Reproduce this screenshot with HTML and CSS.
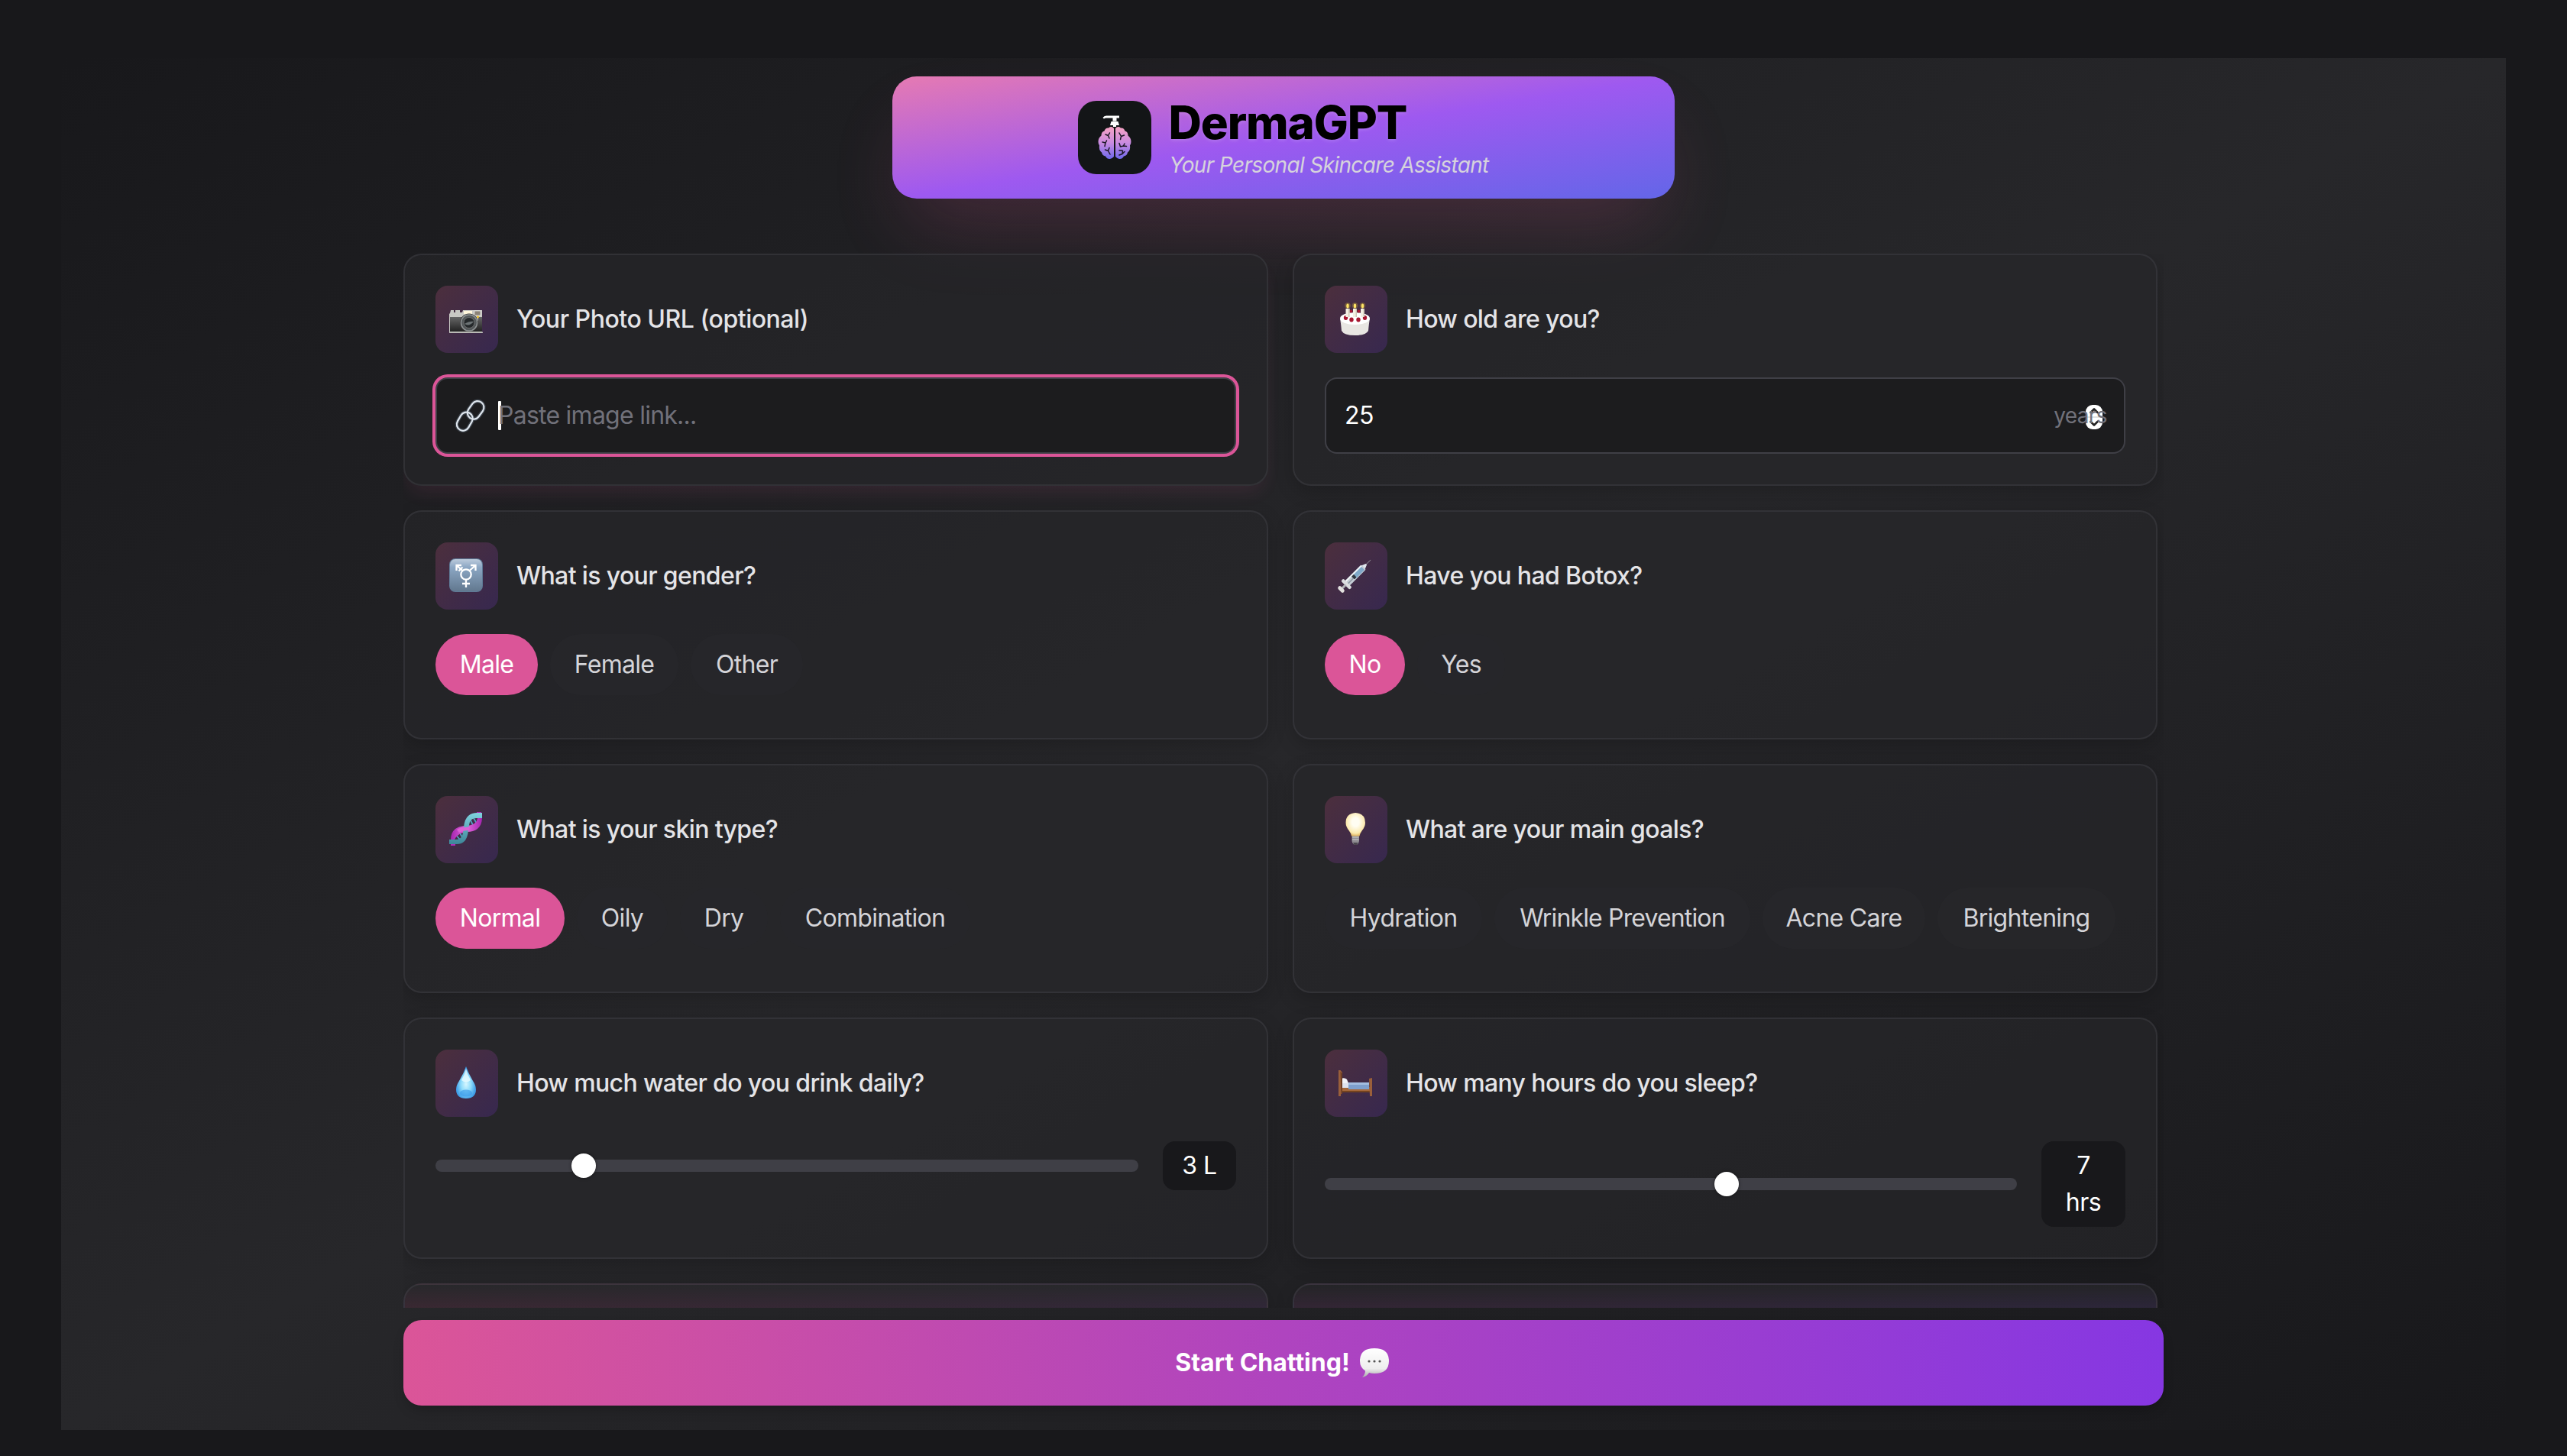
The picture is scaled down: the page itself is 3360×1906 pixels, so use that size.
FILE: index.html
```
<!DOCTYPE html>
<html lang="en">
<head>
<meta charset="utf-8">
<title>DermaGPT</title>
<link rel="stylesheet" href="styles.css">
</head>
<body>
<main class="panel">
  <header class="banner">
    <svg class="logo" viewBox="0 0 96 96">
      <defs><linearGradient id="brain" x1="0" y1="34" x2="0" y2="76" gradientUnits="userSpaceOnUse"><stop offset="0" stop-color="#f7a3c3"/><stop offset=".5" stop-color="#c98be0"/><stop offset="1" stop-color="#6f68ec"/></linearGradient></defs>
      <rect width="96" height="96" rx="24" fill="#131517"/>
      <path d="M54 19.500v3h-3.500v4h-5v-4H37q-2 0-3 1l-1.500-1.500q1.500-2.500 4.500-2.500zM43.500 27h9l1.500 5h-4v2h-4v-2h-4z" fill="#fff"/>
      <path d="M47 36q-3-3.500-7-.5-4-.5-5.500 4-4 1-4 6-4 3-4 8 0 3 1.500 5-1 6 3 9 1 4.500 5 5 2 4 6 3.500 3-.5 5-3zM49 36q3-3.500 7-.5 4-.5 5.500 4 4 1 4 6 4 3 4 8 0 3-1.500 5 1 6-3 9-1 4.500-5 5-2 4-6 3.500-3-.5-5-3z" fill="url(#brain)"/>
      <path d="M36 44l3.500 1.500 2-3.500M39.500 45.500l1.500 3.500M32 54l4 1 1.500-3M36 55l-1 4.500M35.500 64l4 1.500 1.500-4M39.500 65.500l2.500 4.500M54 42l2.500 4.500 4-1.500M56.500 46.500l-1 4M54 55.500l1.500 4.500 4-1 1.500-3M59.500 59l4 .5M54 71l4-1.500.5-4M58 69.500l3-3M54 65h4" fill="none" stroke="#1b1724" stroke-width="1.500" stroke-linecap="round" stroke-linejoin="round"/>
    </svg>
    <div class="brand">
      <h1 class="brand-name">DermaGPT</h1>
      <p class="brand-tag">Your Personal Skincare Assistant</p>
    </div>
  </header>

  <section class="questions">
    <article class="card card--active">
      <div class="card-head">
        <span class="tile"><svg class="emoji" viewBox="0 0 44 44">
          <defs><linearGradient id="cam" x1="0" y1="0" x2="0" y2="1"><stop offset="0" stop-color="#666"/><stop offset="1" stop-color="#222"/></linearGradient></defs>
          <path d="M0 16l1-1 1-4h4v3h2v-3h6v3h3l1-3h25v30H0z" fill="#c9c9c4"/><path d="M1 20h42v19H1z" fill="url(#cam)"/>
          <path d="M19 12h11v4H19z" fill="#fff6dc"/><path d="M33 12h8v6h-8z" fill="#8b8378" stroke="#eee" stroke-width=".7"/><path d="M32 20h6v5h-6z" fill="#ddd"/><circle cx="37.500" cy="20" r="1.400" fill="#f5c21b"/>
          <circle cx="26" cy="27.500" r="12" fill="#333"/><circle cx="26" cy="27.500" r="10.600" fill="#53585a" stroke="#8f9394" stroke-width="1.500"/><circle cx="26" cy="27.500" r="7" fill="#25292b" stroke="#777" stroke-width=".8"/><path d="M20 29q6 4 12-3-5-1-12 3z" fill="#6c7375"/>
          <path d="M0 39.500h44V41H0z" fill="#b8b8b4"/></svg></span>
        <h2 class="question question--photo">Your Photo URL (optional)</h2>
      </div>
      <div class="field field--focus">
        <svg class="link" viewBox="0 0 40 40"><g fill="none"><g stroke="#3b4149" stroke-width="4.400"><rect x="18.500" y="2" width="15" height="23" rx="7.500" transform="rotate(36 26 13.500)"/><rect x="5.500" y="15.500" width="15" height="23" rx="7.500" transform="rotate(30 13 27)"/></g><g stroke="#dfe6ee" stroke-width="2"><rect x="18.500" y="2" width="15" height="23" rx="7.500" transform="rotate(36 26 13.500)"/><rect x="5.500" y="15.500" width="15" height="23" rx="7.500" transform="rotate(30 13 27)"/></g></g></svg>
        <span class="caret"></span>
        <span class="placeholder">Paste image link...</span>
      </div>
    </article>

    <article class="card">
      <div class="card-head">
        <span class="tile"><svg class="emoji" viewBox="0 0 44 44">
          <path d="M2 22q1 5 2 16 3 6 17.500 6T39 38q1-11 2-16-4 7-19.500 7T2 22z" fill="#e8e6e2"/><ellipse cx="21.500" cy="22" rx="19.500" ry="8" fill="#fff"/>
          <g fill="#a8152f"><circle cx="16.500" cy="12.500" r="2"/><circle cx="26.500" cy="12.500" r="2"/><ellipse cx="9.500" cy="21" rx="2.700" ry="3"/><ellipse cx="17" cy="23.500" rx="2.700" ry="3"/><ellipse cx="26" cy="23.500" rx="2.700" ry="3"/><ellipse cx="34.500" cy="21" rx="2.700" ry="3"/></g>
          <path d="M9.500 9h5v11h-5zM19 9h5v11h-5zM29 9h5v11h-5z" fill="#f3efe2"/><path d="M13 9h1.500v11H13zM22.500 9H24v11h-1.500zM32.500 9H34v11h-1.500z" fill="#cfc8b6"/>
          <g fill="#b99a38" opacity=".4"><circle cx="12" cy="5" r="3.800"/><circle cx="21.500" cy="5" r="3.800"/><circle cx="31.500" cy="5" r="3.800"/></g><g fill="#ffe465"><ellipse cx="12" cy="5.500" rx="1.700" ry="3"/><ellipse cx="21.500" cy="5.500" rx="1.700" ry="3"/><ellipse cx="31.500" cy="5.500" rx="1.700" ry="3"/></g></svg></span>
        <h2 class="question">How old are you?</h2>
      </div>
      <div class="field field--number">
        <span class="value">25</span>
        <span class="unit">years</span>
        <svg class="stepper" viewBox="0 0 22 32"><rect width="22" height="32" rx="9" fill="#fff"/><path d="M0 15h22v2H0z" fill="#e2e2e2"/><path d="M6.500 10L11 5.500l4.500 4.500M6.500 22l4.500 4.500 4.500-4.500" fill="none" stroke="#222" stroke-width="2.600" stroke-linecap="round" stroke-linejoin="round"/></svg>
      </div>
    </article>

    <article class="card">
      <div class="card-head">
        <span class="tile"><svg class="emoji" viewBox="0 0 44 44">
          <defs><linearGradient id="gen" x1="0" y1="0" x2="0" y2="1"><stop offset="0" stop-color="#bccbdc"/><stop offset=".25" stop-color="#8ca7c4"/><stop offset="1" stop-color="#62788f"/></linearGradient></defs>
          <rect width="44" height="44" rx="8" fill="#5f7a96"/><rect x="1" y="1" width="42" height="42" rx="7" fill="url(#gen)"/>
          <g fill="none" stroke="#fff" stroke-width="2.300"><circle cx="22" cy="21" r="6.700"/><path d="M22 28v10M17 33h10M26.500 16L34 9.500M28 9h6.500v7M17.500 16L10 9.500M9.500 16V9H16M12.500 16.500l5-5"/></g></svg></span>
        <h2 class="question">What is your gender?</h2>
      </div>
      <div class="pills">
        <span class="pill pill--male pill--on">Male</span><span class="pill pill--female">Female</span><span class="pill pill--other">Other</span>
      </div>
    </article>

    <article class="card">
      <div class="card-head">
        <span class="tile"><svg class="emoji" viewBox="0 0 44 44">
          <g transform="translate(1 43) rotate(-45)">
            <path d="M46 0h12" stroke="#8b8792" stroke-width="1"/>
            <path d="M44-3.500l6 2.500v2l-6 2.500z" fill="#dfe6ec"/>
            <rect x="14" y="-4.500" width="31" height="9" rx="2" fill="#c4ccd4"/>
            <rect x="28" y="-3.500" width="15" height="7" fill="#7fa8c8"/>
            <rect x="25" y="-3" width="4" height="6" rx="1" fill="#2e3640"/>
            <path d="M15-3h29" stroke="#fff" stroke-width="1.300"/>
            <path d="M15 1h10" stroke="#8c95a0" stroke-width="1.500"/>
            <rect x="11" y="-8" width="4.500" height="16" rx="2" fill="#dcdde0"/>
            <rect x="4" y="-1.500" width="8" height="3" fill="#b3b5ba"/>
            <rect x="1" y="-5" width="5" height="10" rx="2.500" fill="#e2e0de"/>
          </g></svg></span>
        <h2 class="question">Have you had Botox?</h2>
      </div>
      <div class="pills">
        <span class="pill pill--no pill--on">No</span><span class="pill pill--yes">Yes</span>
      </div>
    </article>

    <article class="card">
      <div class="card-head">
        <span class="tile"><svg class="emoji" viewBox="0 0 44 44">
          <defs><linearGradient id="teal" x1="0" y1="0" x2="0" y2="1"><stop offset="0" stop-color="#7fd3df"/><stop offset="1" stop-color="#3d8598"/></linearGradient><linearGradient id="mag" x1="0" y1="0" x2="1" y2="0"><stop offset="0" stop-color="#a524b0"/><stop offset=".5" stop-color="#e468dc"/><stop offset="1" stop-color="#a524b0"/></linearGradient></defs>
          <path d="M36 0h6v4h-6zM2 40h6v4H2z" fill="#b02db8"/>
          <path d="M27 9l5 10M32 8l5 9M6 27l8 9M12 24l5 9" stroke="#4fa2c4" stroke-width="1.800"/>
          <path d="M43 7q0 10-6 15-5 4-14 4-8 1-11 4-4 3-5 6H2q0-9 6-14 4-3 12-4 9 0 13-3 4-3 4-8z" fill="url(#mag)"/>
          <path d="M43 1v7H36q-7 0-9 5-1 3-2 11-1 11-6 15-3 3-9 3H0v-6h8q7 0 9-5 1-3 2-11Q20 9 25 5q4-4 12-4z" fill="url(#teal)"/>
          <path d="M21 20q-7 0-11 3l3 4q4-3 13-3l1-5z" fill="#dd62d6"/></svg></span>
        <h2 class="question">What is your skin type?</h2>
      </div>
      <div class="pills">
        <span class="pill pill--normal pill--on">Normal</span><span class="pill pill--oily">Oily</span><span class="pill pill--dry">Dry</span><span class="pill pill--combo">Combination</span>
      </div>
    </article>

    <article class="card">
      <div class="card-head">
        <span class="tile"><svg class="emoji" viewBox="0 0 44 44">
          <defs><radialGradient id="bulb" cx=".5" cy=".4" r=".6"><stop offset=".3" stop-color="#fffdf2"/><stop offset=".8" stop-color="#fbe9ad"/><stop offset="1" stop-color="#e0b35f"/></radialGradient></defs>
          <path d="M17.500 31h9.500v7q-1 5-4.700 5-3.800 0-4.800-5z" fill="#8f8d92"/><path d="M18 33h8.500M18 36h8.500" stroke="#cfcdd0" stroke-width="1.200"/><path d="M19 40h6.500l-1.500 3h-3.500z" fill="#4a464d"/>
          <path d="M22.200 1Q35 2 35 14q0 5-4 10-3 4-3.500 7.500H17Q16.500 28 13.500 24q-4-5-4-10 0-12 12.700-13z" fill="url(#bulb)"/></svg></span>
        <h2 class="question">What are your main goals?</h2>
      </div>
      <div class="pills">
        <span class="pill pill--hydration">Hydration</span><span class="pill pill--wrinkle">Wrinkle Prevention</span><span class="pill pill--acne">Acne Care</span><span class="pill pill--bright">Brightening</span>
      </div>
    </article>

    <article class="card">
      <div class="card-head">
        <span class="tile"><svg class="emoji" viewBox="0 0 44 44">
          <defs><radialGradient id="drop" cx=".5" cy=".55" r=".5"><stop offset="0" stop-color="#d6f6ff"/><stop offset=".5" stop-color="#8fdcfb"/><stop offset="1" stop-color="#3f9ee8"/></radialGradient></defs>
          <path d="M22 1q3 9 9 19 4 6 4 11 0 12-13 12T9 31q0-5 4-11 6-10 9-19z" fill="url(#drop)"/><path d="M22 4q2 8 6 15-6 5-12 0 4-7 6-15z" fill="#e9fbff" opacity=".8"/><ellipse cx="22" cy="36" rx="8" ry="4.500" fill="#3797ea" opacity=".6"/></svg></span>
        <h2 class="question">How much water do you drink daily?</h2>
      </div>
      <div class="range">
        <div class="track"><span class="thumb" style="left:193.800px"></span></div>
        <span class="amount amount--water">3 L</span>
      </div>
    </article>

    <article class="card">
      <div class="card-head">
        <span class="tile"><svg class="emoji" viewBox="0 0 44 44">
          <path d="M4 28h38v7H4z" fill="#a5683b"/><path d="M4 33h38v2H4z" fill="#74431f"/><path d="M4 23h10v6H4z" fill="#dfe3ee"/><path d="M13 22h27v9H13z" fill="#7e9fcd"/><path d="M13 22h27v3H13z" fill="#a3bde0"/><path d="M3 17q5-2 8 1l2 5H3z" fill="#f1f3f8"/><path d="M0 6h2.500l2.500 3v28H3v3H0z" fill="#9a5f3a"/><path d="M2.500 8L5 10v27H3.500z" fill="#6d3f25"/><path d="M40 17l4-1v24h-3z" fill="#9a5f3a"/></svg></span>
        <h2 class="question">How many hours do you sleep?</h2>
      </div>
      <div class="range">
        <div class="track"><span class="thumb" style="left:525.800px"></span></div>
        <span class="amount amount--sleep">7<br>hrs</span>
      </div>
    </article>

    <article class="card card--next card--next-pink"></article>
    <article class="card card--next card--next-violet"></article>
  </section>

  <button class="start" type="button"><span>Start Chatting!</span>
    <svg class="bubble" viewBox="0 0 40 40"><defs><linearGradient id="bub" x1="0" y1="0" x2="0" y2="1"><stop offset="0" stop-color="#fff"/><stop offset=".7" stop-color="#eee"/><stop offset="1" stop-color="#a9a9a9"/></linearGradient></defs><path d="M20 1q19 0 19 16.500T20 34q-4 0-7-1-3 5-9 6 4-4 4-8.500Q1 26 1 17.500 1 1 20 1z" fill="url(#bub)"/><g fill="#555"><circle cx="13" cy="18" r="1.600"/><circle cx="20" cy="18" r="1.600"/><circle cx="27" cy="18" r="1.600"/></g></svg>
  </button>
</main>
</body>
</html>
```
FILE: styles.css
```
* { box-sizing: border-box; margin: 0; padding: 0; }

body {
  height: 1906px;
  padding: 76px 80px 34px;
  overflow: hidden;
  background: #18181b;
  color: #fff;
  font: 430 32px/48px Inter, sans-serif;
}

.panel {
  display: flex;
  flex-direction: column;
  align-items: center;
  height: 1796px;
  padding: 24px 448px 32px;
  background: linear-gradient(to bottom right, #18181b, #27272a 50%, #18181b);
}

/* Header banner */
.banner {
  display: flex;
  flex: none;
  justify-content: center;
  gap: 24px;
  width: 1024px;
  height: 160px;
  padding-top: 30px;
  margin-bottom: 72px;
  border-radius: 32px;
  background: linear-gradient(to bottom right, #e67ab2, #9e59f0 50%, #6366e8);
  box-shadow: 0 50px 100px -24px rgba(219, 85, 152, .22);
}
.logo { width: 96px; height: 96px; margin-top: 2px; }
.brand { width: 419px; white-space: nowrap; }
.brand-name {
  margin: 0 0 6px -1px;
  color: #000;
  font-size: 60px;
  font-weight: 800;
  line-height: 60px;
  letter-spacing: -1.1px;
  text-shadow: 0 2px 4px rgba(255, 255, 255, .15);
}
.brand-tag { color: #d6d3dc; font-size: 28px; font-style: italic; font-weight: 400; line-height: 40px; letter-spacing: -.66px; }

/* Question cards */
.questions {
  display: grid;
  flex: none;
  grid-template-columns: 1fr 1fr;
  align-content: start;
  gap: 32px;
  width: 2304px;
  height: 1380px;
  padding-right: 8px;
  overflow: hidden;
}
.card {
  padding: 40px;
  border: 2px solid rgba(63, 63, 70, .5);
  border-radius: 24px;
  background: rgba(39, 39, 42, .65);
  box-shadow: 0 8px 24px rgba(0, 0, 0, .18);
}
.card--active { box-shadow: 0 14px 24px -8px rgba(219, 85, 152, .12); }
.card--next { height: 316px; }
.card--next-pink { background: linear-gradient(#28282b 0, rgba(40, 40, 43, 0) 34px), linear-gradient(to right, #3c2833, #32273a); }
.card--next-violet { background: linear-gradient(#242427 0, rgba(36, 36, 39, 0) 34px), linear-gradient(to right, #352636, #2d263c); }
.card-head { display: flex; align-items: center; gap: 24px; margin-bottom: 32px; }
.tile {
  flex: none;
  width: 82px;
  height: 88px;
  padding: 21px 18px;
  border-radius: 16px;
  background: linear-gradient(to bottom right, #4c2f3d, #37284f);
}
.emoji { display: block; width: 44px; height: 44px; overflow: visible; }
.question { color: #e4e4e7; font-size: 32px; font-weight: 540; letter-spacing: -.63px; white-space: nowrap; }
.question--photo { letter-spacing: -.47px; }

/* Text fields */
.field {
  position: relative;
  display: flex;
  align-items: center;
  height: 100px;
  border: 2px solid #3f3f46;
  border-radius: 16px;
  background: #1c1c1e;
}
.field--focus { padding-left: 22px; box-shadow: 0 0 0 4px #db5598; }
.field--number { justify-content: space-between; padding: 0 22px 0 24px; }
.link { width: 44px; height: 44px; overflow: visible; }
.caret { width: 4px; height: 38px; margin-left: 14px; border-radius: 1px; background: #fff; }
.placeholder { margin-left: -4px; color: #71717a; letter-spacing: -.75px; }
.value { letter-spacing: -.5px; }
.unit { z-index: 1; color: #71717a; font-size: 28px; letter-spacing: -.6px; }
.stepper { position: absolute; top: 34px; right: 28px; width: 22px; height: 32px; }

/* Choice pills */
.pills { display: flex; gap: 16px; margin-bottom: 16px; }
.pill {
  height: 80px;
  border-radius: 40px;
  background: rgba(39, 39, 42, .8);
  color: #d4d4d8;
  line-height: 80px;
  letter-spacing: -.7px;
  text-align: center;
  white-space: nowrap;
}
.pill--on { background: #db5598; color: #fff; }
.pill--male { width: 134px; }
.pill--female { width: 168px; }
.pill--other { width: 147px; }
.pill--no { width: 105px; }
.pill--yes { width: 115px; }
.pill--normal { width: 169px; }
.pill--oily { width: 119px; }
.pill--dry { width: 115px; }
.pill--combo { width: 249px; }
.pill--hydration { width: 206px; }
.pill--wrinkle { width: 335px; letter-spacing: -.85px; }
.pill--acne { width: 213px; }
.pill--bright { width: 233px; }

/* Sliders */
.range { display: flex; align-items: center; gap: 32px; }
.track { position: relative; flex: 1; height: 16px; border-radius: 8px; background: #3f3f46; }
.thumb {
  position: absolute;
  top: -8px;
  width: 32px;
  height: 32px;
  margin-left: -16px;
  border-radius: 50%;
  background: #fff;
  box-shadow: 0 0 4px rgba(0, 0, 0, .5);
}
.amount { padding: 8px 0; border-radius: 16px; background: #18181b; text-align: center; }
.amount--water { width: 96px; letter-spacing: -.4px; }
.amount--sleep { width: 110px; letter-spacing: -.5px; }

/* Submit */
.start {
  display: flex;
  flex: none;
  align-items: center;
  justify-content: center;
  gap: 12px;
  width: 2304px;
  height: 112px;
  padding-right: 3px;
  margin-top: 16px;
  border: 0;
  border-radius: 24px;
  background: linear-gradient(to right, #db5598, #af44bf 50%, #8637e2);
  box-shadow: 0 8px 16px -4px rgba(0, 0, 0, .25);
  color: #fff;
  font: 700 32px/48px Inter, sans-serif;
}
.bubble { width: 40px; height: 40px; }
```
